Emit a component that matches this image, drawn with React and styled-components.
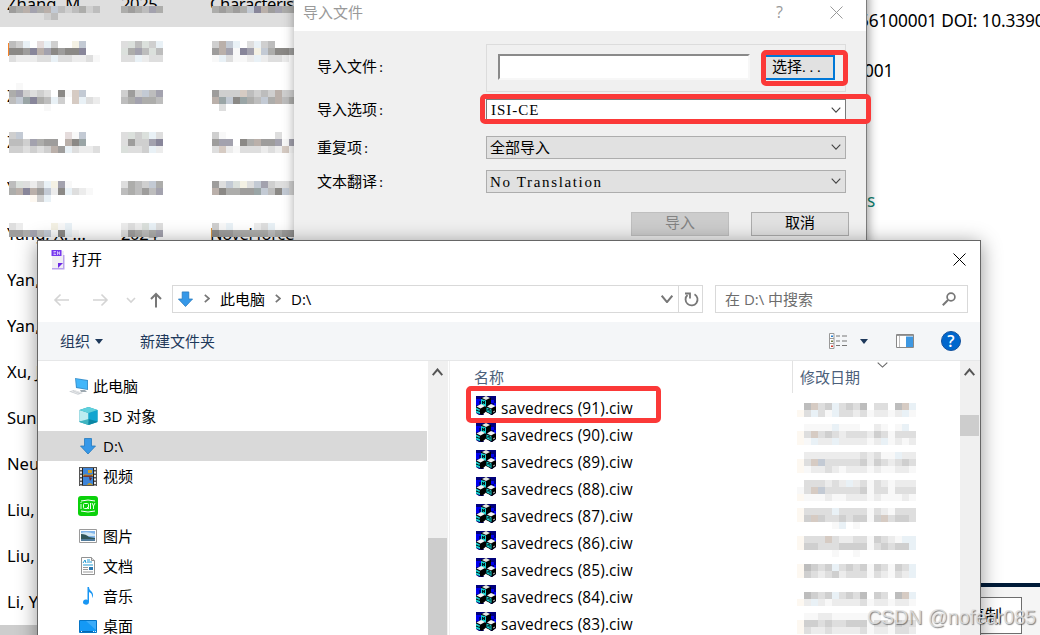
import React from 'react';
import styled, { createGlobalStyle } from 'styled-components';

const GlobalStyle = createGlobalStyle`
  * {
    box-sizing: border-box;
  }
  body {
    margin: 0;
    background: #fff;
    overflow: hidden;
  }
`;

const uiFont = '"Open Sans", "Noto Sans CJK SC", sans-serif';
const formFont = '"Liberation Serif", "Noto Sans CJK SC", serif';

const Screen = styled.div`
  position: relative;
  width: 1040px;
  height: 635px;
  overflow: hidden;
  display: grid;
  grid-template-columns: 866px 1fr;
  background: #fff;
  color: #000;
  font-family: ${uiFont};
  font-size: 15px;
  white-space: nowrap;
`;

/* reference library behind the dialogs */

const Records = styled.div`
  margin-top: -19px;
  font-family: 'Noto Sans', sans-serif;
  font-size: 16.6px;
`;

const Record = styled.div`
  display: grid;
  grid-template-columns: 114px 89px 1fr;
  height: 46px;
  line-height: 45px;
  padding-left: 7px;
  background: ${props => (props.$selected ? '#dedede' : '#fff')};
`;

const Cell = styled.span`
  letter-spacing: ${props => (props.$author ? 0 : -0.4)}px;
  width: ${props => (props.$sliver ? '2px' : 'auto')};
  overflow: hidden;
`;

const RecordsScroll = styled.div`
  height: 11px;
  margin-top: 0;
  background: #cdcdcd;
`;

const Details = styled.div`
  display: flex;
  flex-direction: column;
  height: 635px;
  overflow: hidden;
  font-family: 'Noto Sans', sans-serif;
  font-size: 17.3px;
`;

const DetailLine = styled.div`
  height: 50px;
  line-height: 50px;
  margin-top: ${props => props.$top}px;
  margin-left: ${props => props.$left}px;
  letter-spacing: -0.15px;
  color: ${props => (props.$link ? '#11806f' : '#000')};
`;

const DetailFooter = styled.div`
  margin-top: auto;
  height: 52px;
  padding-top: 10px;
  border-top: 4px solid #001b38;
  background: #f5f5f5;
`;

const CopyButton = styled.div`
  width: 156px;
  height: 37px;
  padding-left: 101px;
  border: 1px solid #6e6e6e;
  background: #fff;
  font: 17px/35px ${uiFont};
`;

const MosaicSvg = styled.svg`
  position: absolute;
  left: ${props => props.$x}px;
  top: ${props => props.$y}px;
`;

/* import dialog */

const ImportWindow = styled.div`
  position: absolute;
  left: 294px;
  top: -12px;
  width: 572px;
  height: 262px;
  background: #f0f0f0;
  box-shadow: 1px 0 0 #7c7c7c, 2px 3px 10px rgba(0, 0, 0, 0.35),
    0 0 14px rgba(0, 0, 0, 0.12);
  font-family: ${formFont};
`;

const ImportTitle = styled.div`
  display: flex;
  align-items: center;
  height: 43px;
  padding: 5px 23px 0 9px;
  background: #fff;
  color: #999;
  font: 15px/20px ${uiFont};
  svg {
    margin-left: 47px;
  }
`;

const Question = styled.span`
  margin-left: auto;
  font-size: 16px;
`;

const ImportRow = styled.div`
  display: grid;
  grid-template-columns: 169px 1fr;
  align-items: center;
  height: ${props => props.$height}px;
  margin-top: ${props => props.$top}px;
  padding: 0 20px 0 23px;
`;

const Label = styled.span`
  padding-bottom: ${props => props.$lift || 0}px;
  font-size: 15px;
  line-height: 20px;
  i {
    margin-left: 2px;
    font-style: normal;
  }
`;

const FileGroup = styled.div`
  display: flex;
  align-items: center;
  height: 48px;
  padding: 0 10px 2px 11px;
  border: 1px solid #dcdcdc;
`;

const FileInput = styled.div`
  width: 252px;
  height: 26px;
  background: #fff;
  border: 2px solid;
  border-color: #8a8a8a #f7f7f7 #f7f7f7 #8a8a8a;
`;

const ChooseButton = styled.div`
  width: 71px;
  height: 25px;
  margin-left: auto;
  padding-left: 6px;
  border: 2px solid #0078d7;
  background: #e1e1e1;
  line-height: 20px;
  font-size: 15px;
  i {
    letter-spacing: 3.8px;
    font-style: normal;
  }
`;

const Combo = styled.div`
  display: flex;
  align-items: center;
  justify-content: space-between;
  height: 100%;
  padding: 0 4px 0 ${props => (props.$open ? 4 : 3)}px;
  border: 1px solid ${props => (props.$open ? '#7a7a7a' : '#adadad')};
  background: ${props => (props.$open ? '#fff' : '#e1e1e1')};
  font-size: 15px;
  line-height: 20px;
  letter-spacing: ${props => props.$spacing || 0}px;
  svg {
    margin-bottom: 1px;
  }
`;

const ImportActions = styled.div`
  display: flex;
  justify-content: flex-end;
  gap: 22px;
  margin-top: 19px;
  padding-right: 17px;
`;

const ActionButton = styled.div`
  width: 98px;
  height: 24px;
  border: 1px solid ${props => (props.$disabled ? '#bfbfbf' : '#adadad')};
  background: ${props => (props.$disabled ? '#ccc' : '#e1e1e1')};
  color: ${props => (props.$disabled ? '#838383' : '#000')};
  font-size: 15px;
  line-height: 21px;
  text-align: center;
`;

/* open dialog */

const OpenWindow = styled.div`
  position: absolute;
  left: 37px;
  top: 240px;
  width: 944px;
  height: 420px;
  display: flex;
  flex-direction: column;
  border: 1px solid #666;
  background: #fff;
  box-shadow: 0 3px 19px rgba(0, 0, 0, 0.42);
`;

const OpenTitle = styled.div`
  display: flex;
  align-items: center;
  height: 37px;
  padding: 0 14px 0 13px;
  line-height: 20px;
`;

const TitleText = styled.span`
  flex: 1;
  margin-left: 7px;
  padding-bottom: 2px;
`;

const NavRow = styled.div`
  display: flex;
  align-items: center;
  height: 44px;
  padding: 0 12px 2px 15px;
`;

const NavArrows = styled.div`
  display: flex;
  align-items: center;
  width: 119px;
  padding-top: 2px;
`;

const AddressBar = styled.div`
  display: flex;
  align-items: center;
  width: 531px;
  height: 28px;
  padding: 0 0 1px 4px;
  border: 1px solid #d9d9d9;
  line-height: 24px;
`;

const Crumb = styled.span`
  margin: 0 10px;
`;

const RefreshBox = styled.div`
  display: flex;
  align-items: center;
  justify-content: center;
  width: 25px;
  height: 26px;
  margin: 1px -1px 0 5px;
  border-left: 1px solid #d9d9d9;
`;

const SearchBox = styled.div`
  display: flex;
  align-items: center;
  justify-content: space-between;
  width: 253px;
  height: 28px;
  margin-left: auto;
  padding: 0 11px 0 9px;
  border: 1px solid #d9d9d9;
  color: #6d6d6d;
  line-height: 26px;
`;

const Toolbar = styled.div`
  display: flex;
  align-items: center;
  height: 39px;
  padding: 0 19px 0 22px;
  border-bottom: 1px solid #e6e7e8;
  background: #f4f6f8;
  color: #1e395b;
  line-height: 20px;
`;

const Caret = styled.span`
  width: 0;
  height: 0;
  border: 4px solid transparent;
  border-top: 5px solid #1e395b;
  border-bottom: 0;
  margin-left: ${props => props.$gap}px;
`;

const NewFolder = styled.span`
  margin-left: 37px;
  margin-right: auto;
`;

const PaneIcon = styled.svg`
  margin-left: 28px;
`;

const HelpBadge = styled.span`
  width: 20px;
  height: 20px;
  margin-left: 27px;
  border: 1px solid #14529c;
  border-radius: 50%;
  background: #0067cd;
  color: #fff;
  font-size: 16px;
  font-weight: 600;
  line-height: 18px;
  text-align: center;
`;

const OpenBody = styled.div`
  display: grid;
  grid-template-columns: 390px 20px 2px 342px 168px 20px;
  flex: 1;
`;

const Tree = styled.div`
  padding-top: 10px;
`;

const TreeItem = styled.div`
  display: flex;
  align-items: center;
  height: 30px;
  margin-right: 1px;
  padding-left: ${props => (props.$root ? 31 : 40)}px;
  background: ${props => (props.$active ? '#d9d9d9' : 'transparent')};
  line-height: 28px;
`;

const TreeIcon = styled.span`
  display: flex;
  justify-content: center;
  width: 20px;
  margin-right: ${props => (props.$root ? 4 : 5)}px;
`;

const Scrollbar = styled.div`
  display: flex;
  flex-direction: column;
  align-items: center;
  padding-top: 7px;
  background: #f0f0f0;
  svg {
    margin-right: 2px;
  }
`;

const Thumb = styled.div`
  width: 19px;
  height: ${props => props.$height}px;
  margin-top: ${props => props.$top}px;
  margin-right: 1px;
  background: #cdcdcd;
`;

const Divider = styled.div`
  border-right: 1px solid #f0f0f0;
`;

const Files = styled.div`
  padding-left: 26px;
`;

const ColumnHeader = styled.div`
  height: 32px;
  margin-left: -2px;
  color: #4c607a;
  line-height: 32px;
`;

const FileRow = styled.div`
  display: flex;
  align-items: center;
  gap: 5px;
  height: 27px;
  font-size: 15.4px;
  letter-spacing: 0.14px;
  line-height: 25px;
  span {
    padding-top: 3px;
  }
  svg {
    margin-bottom: 2px;
  }
`;

const DateColumn = styled.div`
  display: flex;
  align-items: flex-start;
  height: 32px;
  padding-left: 7px;
  border-left: 1px solid #e2e2e2;
  color: #4c607a;
  line-height: 32px;
  svg {
    margin: 1px 0 0 17px;
  }
`;

const Highlight = styled.div`
  position: absolute;
  left: ${props => props.$x}px;
  top: ${props => props.$y}px;
  width: ${props => props.$w}px;
  height: ${props => props.$h}px;
  border: 5px solid #fb3938;
  border-radius: 5px;
`;

const Watermark = styled.div`
  position: absolute;
  right: 4px;
  bottom: 6px;
  color: rgba(225, 225, 225, 0.85);
  font: 19.6px/24px 'Liberation Sans', sans-serif;
  text-shadow: 1px 1px 1px rgba(80, 80, 80, 0.7);
`;

const shades = {
  1: '#f8f8f8',
  2: '#ececec',
  3: '#dedede',
  4: '#cfcfcf',
  5: '#bdbdbd',
  6: '#adadab',
  7: '#9e9d9c',
  8: '#8b8986',
  b: '#e9f1f6',
  B: '#c3cad4',
  p: '#e5dcdc',
  t: '#d6cbc3',
  T: '#bab0aa',
  y: '#f4f1e4',
  v: '#88869a',
  V: '#a3a2ae',
  g: '#9aa5a6',
  G: '#dbe0dc',
  c: '#fdf8f1',
};

const recordMosaics = [
  { x: 9, y: 6, rows: ['76TV6TB545645', '.....45......'] },
  { x: 121, y: 6, rows: ['6765V6'] },
  { x: 212, y: 6, rows: ['67676BvT7V66'] },
  { x: 9, y: 41, rows: ['54b.pb4..yB..', '887vTV8788v..', '322233b332231'] },
  { x: 121, y: 41, rows: ['3G5G4b', 'G6V5G5', '33b233'] },
  { x: 212, y: 41, rows: ['4TBb.3b45...', '7TV1vVyB6887', '1b3112b2332'] },
  { x: 9, y: 83, rows: ['.1...........', '6V4343.81tB..', '5Bgv65b4.tb32', '.....1.......'] },
  { x: 121, y: 90, rows: ['474B5V', '56V665'] },
  { x: 212, y: 90, rows: ['7444t5454T44', 'TgB8g65B6T56', '.3..........'] },
  { x: 9, y: 132, rows: ['4B......p1B..', '554V677.T8g..', '443434T7b3223'] },
  { x: 121, y: 132, rows: ['3G4Gb3', '3744Vv', 'G334b2'] },
  { x: 212, y: 132, rows: ['41.......3..', '7VV.86T77V1V', '3t21333232t1'] },
  { x: 9, y: 181, rows: ['5G324byV1....', '6TvT7B28b321.', '...c4b.......'] },
  { x: 121, y: 181, rows: ['3654B6', '56575V'] },
  { x: 212, y: 181, rows: ['73BGy3BV4334', 'T86677gB58B4'] },
  { x: 9, y: 223, rows: ['32....y1b....', '776V5B18b1...'] },
  { x: 121, y: 223, rows: ['232Gb3', '37656V'] },
  { x: 212, y: 223, rows: ['41b...23b...', '877666665677'] },
];

const dateMosaics = [
  { y: 403, rows: ['.5t34b3435.33.5tb', 'c3b31b332312212b1'] },
  { y: 424, rows: ['.1111b111..21.1b.', 'c3t34323332431333', 'c1b22b222212b1212'] },
  { y: 452, rows: ['.2222222232311b22', 'c3tB3333342432343', 'c1223212221211221'] },
  { y: 480, rows: ['.333232b231321222', '13tB3333341331333', 'c1112112221211121'] },
  { y: 508, rows: ['c3333b33331321333', 'c4t433434414t3443', '.....1b.1........'] },
  { y: 536, rows: ['c333t3223314321bb', 'c443334444134344b', '.....1..1........'] },
  { y: 564, rows: ['c5434b3434143143b', 'c432342333132132b'] },
  { y: 592, rows: ['.5434b3435.43.5tb', 'c2b21222231221221'] },
  { y: 613, rows: ['.11221111111.1111', 'c4434334441331433', 'c3223222231221332'] },
];

const Mosaic = ({ x, y, rows }) => (
  <MosaicSvg
    $x={x}
    $y={y}
    width={rows[0].length * 7}
    height={rows.length * 7}
    shapeRendering="crispEdges"
  >
    {rows.map((row, j) =>
      row
        .split('')
        .map((shade, i) =>
          shade === '.' ? null : (
            <rect
              key={`${i}-${j}`}
              x={i * 7}
              y={j * 7}
              width="7"
              height="7"
              fill={shades[shade]}
            />
          )
        )
    )}
  </MosaicSvg>
);

const Marker = styled.span`
  display: block;
  width: 1px;
  height: 13px;
  margin: 16px 0 0 1px;
  background: #f5822a;
`;

const records = [
  { author: 'Zhang, M...', year: '2025', title: 'Characteris', selected: true },
  { author: <Marker />, sliver: true },
  { author: 'Z', sliver: true },
  { author: 'Z', sliver: true },
  { author: 'Y', sliver: true },
  { author: 'Yang, X. ...', year: '2024', title: 'Novel force' },
  { author: 'Yan,' },
  { author: 'Yan,' },
  { author: 'Xu, J' },
  { author: 'Sun,' },
  { author: 'Neu' },
  { author: 'Liu,' },
  { author: 'Liu,' },
  { author: 'Li, Y' },
];

const files = [91, 90, 89, 88, 87, 86, 85, 84, 83];

const Chevron = ({ w = 10, h = 6, color = '#444', stroke = 1.1, dir = 'down' }) => {
  const paths = {
    down: `M.7.7 L${w / 2} ${h - 0.9} L${w - 0.7}.7`,
    up: `M.7 ${h - 0.8} L${w / 2} 1.5 L${w - 0.7} ${h - 0.8}`,
    right: `M.8.8 L${w - 1} ${h / 2} L.8 ${h - 0.8}`,
  };
  return (
    <svg width={w} height={h} fill="none" stroke={color} strokeWidth={stroke}>
      <path d={paths[dir]} />
    </svg>
  );
};

const Cross = ({ color }) => (
  <svg width="13" height="13" fill="none" stroke={color}>
    <path d="M.5.5l12 12M12.5.5l-12 12" />
  </svg>
);

const DownloadIcon = ({ width = 18 }) => (
  <svg width={width} height="18" viewBox="0 0 18 18">
    <path
      d="M5.5 1.5h7v7.5h4L9 17 1.5 9h4z"
      fill="#3698e8"
      stroke="#2478bd"
      strokeWidth=".8"
    />
  </svg>
);

const EndNoteIcon = () => (
  <svg width="14" height="20">
    <path d="M1 1h12v18H1z" fill="#f0eef3" />
    <path d="M12 5h1.5v14.5H1V18h11z" fill="#b9a2ec" />
    <path d="M.5 0h10v6H.5z" fill="#7638ee" />
    <path d="M2.5 1.5h2.5M2.5 3h2M2.5 4.5H5M6.5 5V1.5l2 3v-3" stroke="#e4d8ff" strokeWidth=".8" fill="none" />
    <path d="M7 13h5l-5 5z" fill="#6c28e4" />
  </svg>
);

const BlocksIcon = () => (
  <svg width="20" height="19" viewBox="0 0 20 19">
    <path d="M0 0h20v19H0z" fill="#00007c" />
    <path d="M0 3h5v2H3v4H0zM15 4h3v3h-3zM18 7h2v3h-2z" fill="#0000f0" />
    <path d="M0 17l3 2H0zM10 12l-3 5 1 2h7l-3-3zM20 16v3h-4z" fill="#fff" />
    <path d="M5 2l5-2 5 2v6l-5 3-5-3z" fill="#000" />
    <path d="M6 2l4-2 4 2-4 2z" fill="#e4e8e8" />
    <path d="M5 3l5 1.500v6.500l-5-2z" fill="#16d0d0" />
    <path d="M6.500 8V5l2 3V5" stroke="#001c1c" fill="none" />
    <path d="M0 11l5-2.500L10 11v4.500L6 19l-6-3z" fill="#000" />
    <path d="M.5 10.500l4.500-2.500 4 2-4.500 2.500z" fill="#f0f3f3" />
    <path d="M0 11.500l4 2-.5 1.500L0 13.500zM0 14.500l4 1.500v2L0 16.500z" fill="#16d0d0" />
    <path d="M10 11l5-2.500 5 2.500v5l-4 3-6-3z" fill="#000" />
    <path d="M11 10.500l4-2.500 4.500 2-4.500 2.500z" fill="#f0f3f3" />
    <path d="M10.500 11.500l5 2V18l-5-2.500z" fill="#16d0d0" />
    <path d="M12 15v-2l2 1v2.500" stroke="#001c1c" fill="none" />
    <path d="M17 16l2-1" stroke="#bbb" />
  </svg>
);

const ComputerIcon = () => (
  <svg width="20" height="18" viewBox="0 0 20 18">
    <path d="M6 1l13 2v10L7 11z" fill="#3b93cf" />
    <path d="M7 2l11 2v8L8 10z" fill="#41b6fa" />
    <path d="M11 13h5l2 2h-6z" fill="#9da8b0" />
    <path d="M0 14.500l5-1.500 9 3-5 1.800z" fill="#c8cdd2" />
    <path d="M2.500 14.200l7 2.500M5 13.500l7 2.500" stroke="#f1f1f1" strokeWidth=".7" />
  </svg>
);

const CubeIcon = () => (
  <svg width="19" height="18" viewBox="0 0 19 18">
    <path d="M.5 3L9.500 0l9 3v12L9.500 18l-9-3z" fill="#19a0b8" />
    <path d="M.5 3l9 3v9l-9-1z" fill="#bcecf0" />
    <path d="M18.500 3l-9 3v9l9-1z" fill="#12a5d0" />
    <path d="M.5 3L9.500 0l9 3-9 3z" fill="#5fd0dc" />
    <path d="M.5 14.500l9-2.500V18l-9-3z" fill="#3fb4c0" />
    <path d="M18.500 14.500l-9-2.500V18l9-3z" fill="#0b86a4" />
  </svg>
);

const VideoIcon = () => (
  <svg width="18" height="19">
    <path d="M0 0h18v19H0z" fill="#555" />
    <path d="M2 1v18M16 1v18" stroke="#e8e8e8" strokeWidth="2" strokeDasharray="2 1.500" />
    <path d="M4 1h10v8H4zM4 10h10v8H4z" fill="#3e85d8" />
    <path d="M4 8c3-2 5 1 10-1v2H4zM8 18c2-3 4-2 6 0z" fill="#be982e" />
    <path d="M9 3h4v3H9z" fill="#d1a124" />
    <path d="M5 9h8" stroke="#861e20" />
    <path d="M10 10l3 1-2 3z" fill="#692523" />
    <path d="M3.500 1v17M14.500 1v17" stroke="#222" />
  </svg>
);

const QiyiIcon = () => (
  <svg width="20" height="20">
    <rect width="20" height="20" rx="3" fill="#0bd10b" />
    <path d="M3 5q7-2 14 0M3 15q7 2 14 0" stroke="#fff" fill="none" />
    <path d="M3 8v5M3 6v1M12.500 7v6M14 7l1.500 3L17 7M15.500 10v3" stroke="#e8ffe8" fill="none" />
    <rect x="5.500" y="7.500" width="5" height="5" rx="1" stroke="#e8ffe8" fill="none" />
    <path d="M9 11l2 2" stroke="#e8ffe8" />
  </svg>
);

const PictureIcon = () => (
  <svg width="18" height="14">
    <path d="M.5.5h17v13H.5z" fill="#fff" stroke="#9a9a9a" />
    <path d="M2 2h14v10H2z" fill="#81b5eb" />
    <path d="M2 4q6-2 14 1v2H2z" fill="#d2e7f4" />
    <path d="M2 5q5 0 8 3l6 1v1H2z" fill="#31575b" />
    <path d="M2 10h14v2H2z" fill="#527c9c" />
  </svg>
);

const DocumentIcon = () => (
  <svg width="18" height="18">
    <path d="M2.500.5h10l3 3v14h-13z" fill="#fff" stroke="#929292" />
    <path d="M12.500.5v3h3" fill="#ddd" stroke="#929292" />
    <path d="M4 6l2-3 1 3M8 3h3M8 5h5M4 8h10" stroke="#219ad3" fill="none" />
    <path d="M4 10.500h5M4 12.500h5M4 15h10" stroke="#999" />
    <path d="M10 10h4v3h-4z" fill="#2878b0" />
  </svg>
);

const MusicIcon = () => (
  <svg width="18" height="18">
    <path d="M8.500 0h1.500c0 4 4 4 4 8 0 2-1 3-1 3 .5-4-1-5-3-6v10c0 4-6 3-6 .5C4 13 6 12 8.500 13z" fill="#1996f3" />
  </svg>
);

const DesktopIcon = () => (
  <svg width="18" height="13">
    <path d="M.5.500h17v12H.5z" fill="#1499f5" stroke="#0675c6" />
    <path d="M17 1v9L7 1z" fill="#3cacf9" />
    <path d="M1 11.500h14" stroke="#0568b0" />
    <path d="M2 11.500h1M14 11.500h1M16 11.500h1" stroke="#e4f4ff" />
  </svg>
);

const places = [
  { label: '此电脑', Icon: ComputerIcon, root: true },
  { label: '3D 对象', Icon: CubeIcon },
  { label: 'D:\\', Icon: DownloadIcon, active: true },
  { label: '视频', Icon: VideoIcon },
  { label: '', Icon: QiyiIcon },
  { label: '图片', Icon: PictureIcon },
  { label: '文档', Icon: DocumentIcon },
  { label: '音乐', Icon: MusicIcon },
  { label: '桌面', Icon: DesktopIcon },
];

const ImportDialog = () => (
  <ImportWindow>
    <ImportTitle>
      导入文件
      <Question>?</Question>
      <Cross color="#999" />
    </ImportTitle>
    <ImportRow $top={13} $height={48}>
      <Label $lift={3}>
        导入文件<i>:</i>
      </Label>
      <FileGroup>
        <FileInput />
        <ChooseButton>
          选择<i>...</i>
        </ChooseButton>
      </FileGroup>
    </ImportRow>
    <ImportRow $top={7} $height={21}>
      <Label>
        导入选项<i>:</i>
      </Label>
      <Combo $open $spacing={1}>
        ISI-CE
        <Chevron />
      </Combo>
    </ImportRow>
    <ImportRow $top={16} $height={23}>
      <Label>
        重复项<i>:</i>
      </Label>
      <Combo>
        全部导入
        <Chevron />
      </Combo>
    </ImportRow>
    <ImportRow $top={11} $height={23}>
      <Label>
        文本翻译<i>:</i>
      </Label>
      <Combo $spacing={1.65}>
        No Translation
        <Chevron />
      </Combo>
    </ImportRow>
    <ImportActions>
      <ActionButton $disabled>导入</ActionButton>
      <ActionButton>取消</ActionButton>
    </ImportActions>
  </ImportWindow>
);

const OpenDialog = () => (
  <OpenWindow>
    <OpenTitle>
      <EndNoteIcon />
      <TitleText>打开</TitleText>
      <Cross color="#000" />
    </OpenTitle>
    <NavRow>
      <NavArrows>
        <svg width="110" height="16" fill="none" strokeWidth="1.600">
          <path d="M16 8H2M7.500 2.500L2 8l5.500 5.500M40 8h14M48.500 2.500L54 8l-5.500 5.500" stroke="#d4d4d4" />
          <path d="M74 6l4 4 4-4" stroke="#d4d4d4" />
          <path d="M103 15.500V2M98 7l5-5 5 5" stroke="#777" strokeWidth="2" />
        </svg>
      </NavArrows>
      <AddressBar>
        <DownloadIcon width={17} />
        <svg width="10" height="10" />
        <Chevron dir="right" w={6} h={9} color="#777" stroke={1.7} />
        <Crumb>此电脑</Crumb>
        <Chevron dir="right" w={6} h={9} color="#777" stroke={1.7} />
        <Crumb>D:\</Crumb>
        <svg width="1" height="1" style={{ marginLeft: 'auto' }} />
        <Chevron w={12} h={8} color="#777" stroke={2} />
        <RefreshBox>
          <svg width="15" height="15" fill="none" stroke="#777" strokeWidth="1.800">
            <path d="M10.500 2.200A6 6 0 1 1 3.500 3" />
            <path d="M1 1.500h5v5" />
          </svg>
        </RefreshBox>
      </AddressBar>
      <SearchBox>
        在 D:\ 中搜索
        <svg width="14" height="14" fill="none" stroke="#777">
          <circle cx="9" cy="5" r="3.900" strokeWidth="1.700" />
          <path d="M6 8L.8 13.200" strokeWidth="2" />
        </svg>
      </SearchBox>
    </NavRow>
    <Toolbar>
      组织
      <Caret $gap={5} />
      <NewFolder>新建文件夹</NewFolder>
      <svg width="18" height="16">
        <path d="M.5.500h4.500v15H.5zM.5 5.500H5M.5 10.500H5" fill="#fff" stroke="#999" />
        <path d="M7 3h4M13 3h5M7 8h4M13 8h5M7 12.500h4M13 12.500h5" stroke="#777" />
        <path d="M2 2.500h2v1.500H2z" fill="#257fd1" />
        <path d="M2 7.500h2V9H2z" fill="#6f7c45" />
        <path d="M2 12.500h2V14H2z" fill="#d33526" />
      </svg>
      <Caret $gap={13} />
      <PaneIcon width="18" height="14">
        <path d="M.5.500h17v13H.5z" fill="#fff" stroke="#888" />
        <path d="M1 1.500h16" stroke="#999" />
        <path d="M3.500 2v11" stroke="#bbb" />
        <path d="M10 2.500h7V13h-7z" fill="#3e98e2" />
      </PaneIcon>
      <HelpBadge>?</HelpBadge>
    </Toolbar>
    <OpenBody>
      <Tree>
        {places.map(({ label, Icon, root, active }, i) => (
          <TreeItem key={i} $root={root} $active={active}>
            <TreeIcon $root={root}>
              <Icon />
            </TreeIcon>
            {label}
          </TreeItem>
        ))}
      </Tree>
      <Scrollbar>
        <Chevron dir="up" w={11} h={8} color="#555" stroke={2} />
        <Thumb $top={162} $height={110} />
      </Scrollbar>
      <Divider />
      <Files>
        <ColumnHeader>名称</ColumnHeader>
        {files.map(n => (
          <FileRow key={n}>
            <BlocksIcon />
            <span>savedrecs ({n}).ciw</span>
          </FileRow>
        ))}
      </Files>
      <DateColumn>
        修改日期
        <Chevron w={11} h={6} color="#666" stroke={1.1} />
      </DateColumn>
      <Scrollbar>
        <Chevron dir="up" w={11} h={8} color="#555" stroke={2} />
        <Thumb $top={39} $height={21} />
      </Scrollbar>
    </OpenBody>
  </OpenWindow>
);

export default function App() {
  return (
    <>
      <GlobalStyle />
      <Screen>
        <Records>
          {records.map((record, i) => (
            <Record key={i} $selected={record.selected}>
              <Cell $author $sliver={record.sliver}>
                {record.author}
              </Cell>
              <Cell>{record.year}</Cell>
              <Cell>{record.title}</Cell>
            </Record>
          ))}
          <RecordsScroll />
        </Records>
        <Details>
          <DetailLine $top={-4} $left={-7}>56100001 DOI: 10.3390</DetailLine>
          <DetailLine $top={0} $left={-2}>001</DetailLine>
          <DetailLine $top={80} $left={1} $link>
            s
          </DetailLine>
          <DetailFooter>
            <CopyButton>复制</CopyButton>
          </DetailFooter>
        </Details>
        {recordMosaics.map((block, i) => (
          <Mosaic key={i} {...block} />
        ))}
        <ImportDialog />
        <OpenDialog />
        {dateMosaics.map((block, i) => (
          <Mosaic key={i} x={797} {...block} />
        ))}
        <Highlight $x={761} $y={50} $w={87} $h={36} />
        <Highlight $x={480} $y={94} $w={391} $h={30} />
        <Highlight $x={466} $y={386} $w={195} $h={37} />
        <Watermark>CSDN @nofear085</Watermark>
      </Screen>
    </>
  );
}
